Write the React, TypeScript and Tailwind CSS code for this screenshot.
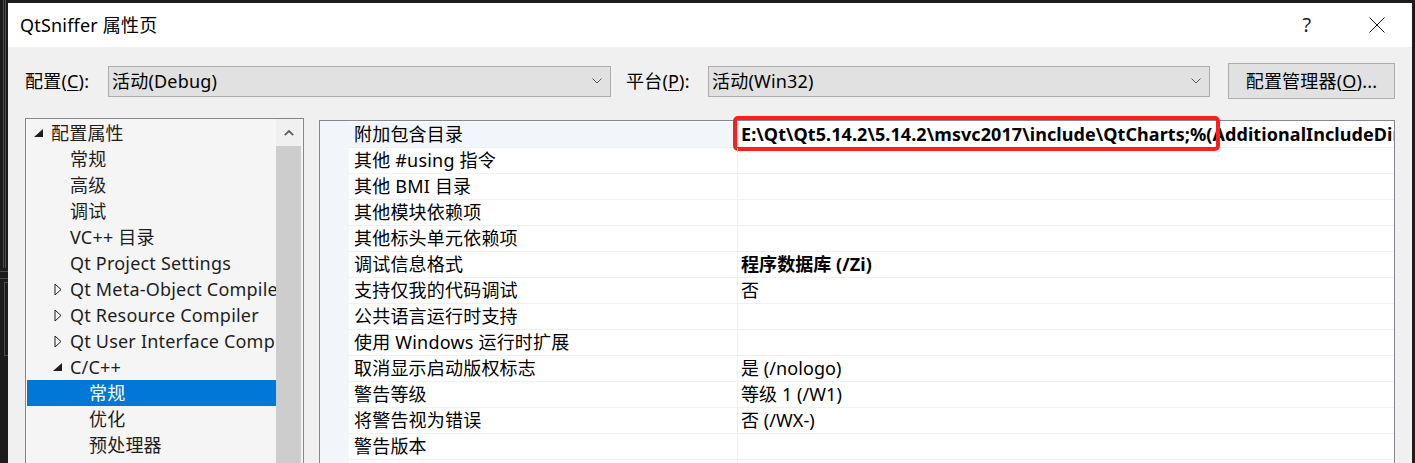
import React from "react";

type TreeItem = {
  label: string;
  level: number;
  icon?: "open" | "closed";
  selected?: boolean;
};

const treeItems: TreeItem[] = [
  { label: "配置属性", level: 0, icon: "open" },
  { label: "常规", level: 1 },
  { label: "高级", level: 1 },
  { label: "调试", level: 1 },
  { label: "VC++ 目录", level: 1 },
  { label: "Qt Project Settings", level: 1 },
  { label: "Qt Meta-Object Compiler", level: 1, icon: "closed" },
  { label: "Qt Resource Compiler", level: 1, icon: "closed" },
  { label: "Qt User Interface Compiler", level: 1, icon: "closed" },
  { label: "C/C++", level: 1, icon: "open" },
  { label: "常规", level: 2, selected: true },
  { label: "优化", level: 2 },
  { label: "预处理器", level: 2 },
];

const padByLevel = ["pl-0", "pl-[19px]", "pl-[38px]"];

type Prop = { name: string; value?: string; bold?: boolean };

const props: Prop[] = [
  {
    name: "附加包含目录",
    value:
      "E:\\Qt\\Qt5.14.2\\5.14.2\\msvc2017\\include\\QtCharts;%(AdditionalIncludeDirectories)",
    bold: true,
  },
  { name: "其他 #using 指令" },
  { name: "其他 BMI 目录" },
  { name: "其他模块依赖项" },
  { name: "其他标头单元依赖项" },
  { name: "调试信息格式", value: "程序数据库 (/Zi)", bold: true },
  { name: "支持仅我的代码调试", value: "否" },
  { name: "公共语言运行时支持" },
  { name: "使用 Windows 运行时扩展" },
  { name: "取消显示启动版权标志", value: "是 (/nologo)" },
  { name: "警告等级", value: "等级 1 (/W1)" },
  { name: "将警告视为错误", value: "否 (/WX-)" },
  { name: "警告版本" },
  { name: "SDL 检查" },
];

const Chevron = () => (
  <svg width="10" height="6" viewBox="0 0 10 6" className="shrink-0">
    <polyline points="0.5,0.5 5,5 9.5,0.5" fill="none" stroke="#555" strokeWidth="1" />
  </svg>
);

const Expander = ({ icon }: { icon?: "open" | "closed" }) => (
  <div className="w-[24px] h-full flex items-center justify-end pr-[8px] shrink-0">
    {icon === "open" && (
      <svg width="9" height="8" viewBox="0 0 9 8">
        <polygon points="9,0 9,8 0,8" fill="#1e1e1e" />
      </svg>
    )}
    {icon === "closed" && (
      <svg width="8" height="13" viewBox="0 0 8 13">
        <polygon points="1,1 7,6.5 1,12" fill="none" stroke="#1e1e1e" strokeWidth="1" />
      </svg>
    )}
  </div>
);

const Select = ({ text }: { text: string }) => (
  <div className="w-full h-[31px] bg-[#e1e1e1] border border-[#adadad] flex items-center pl-[3px] pr-[8px]">
    <span className="flex-1 whitespace-nowrap">{text}</span>
    <Chevron />
  </div>
);

const App = () => {
  return (
    <div className="w-[1415px] h-[463px] overflow-hidden bg-[#1c1c1c] flex font-['Noto_Sans','Noto_Sans_CJK_SC',sans-serif] text-[18px] tracking-[0.2px] text-black">
      {/* left strip: other windows behind */}
      <div className="w-[8px] shrink-0 flex flex-col">
        <div className="ml-[3px] w-[3px] h-[268px] border-x border-[#4b4b4b]" />
        <div className="mt-[3px] h-[8px] border-y border-[#4b4b4b]" />
        <div className="ml-[4px] w-[4px] h-[74px] border-l border-t border-b border-[#4b4b4b] mt-[3px]" />
      </div>

      <div className="w-[1404px] shrink-0 mt-[3px] flex flex-col">
        {/* title bar */}
        <div className="h-[44px] bg-white flex items-center pl-[12px] shrink-0">
          <span className="flex-1">QtSniffer 属性页</span>
          <div className="w-[70px] flex justify-center text-[20px] leading-none text-[#222]">?</div>
          <div className="w-[70px] flex justify-center">
            <svg width="16" height="16" viewBox="0 0 16 16">
              <line x1="0.5" y1="0.5" x2="15.5" y2="15.5" stroke="#111" strokeWidth="1" />
              <line x1="15.5" y1="0.5" x2="0.5" y2="15.5" stroke="#111" strokeWidth="1" />
            </svg>
          </div>
        </div>

        {/* body */}
        <div className="flex-1 min-h-0 bg-[#f0f0f0] pl-[17px] pr-[17px] pt-[16px] flex flex-col">
          <div className="h-[36px] flex items-center shrink-0">
            <span className="w-[83px] shrink-0 whitespace-nowrap">
              配置(<span className="underline underline-offset-2">C</span>):
            </span>
            <div className="w-[503px] shrink-0">
              <Select text="活动(Debug)" />
            </div>
            <span className="ml-[15px] w-[82px] shrink-0 whitespace-nowrap">
              平台(<span className="underline underline-offset-2">P</span>):
            </span>
            <div className="w-[502px] shrink-0">
              <Select text="活动(Win32)" />
            </div>
            <button className="ml-[18px] w-[167px] h-[36px] shrink-0 bg-[#e1e1e1] border border-[#adadad] flex items-center justify-center whitespace-nowrap">
              配置管理器(<span className="underline underline-offset-2">O</span>)...
            </button>
          </div>

          <div className="mt-[19px] flex items-start">
            {/* tree */}
            <div className="w-[279px] h-[400px] shrink-0 border border-[#828790] bg-[#f5f5f5] px-px flex">
              <div className="flex-1 min-w-0 pt-px flex flex-col">
                {treeItems.map((item, i) => (
                  <div
                    key={i}
                    className={`h-[26px] flex items-center overflow-hidden whitespace-nowrap leading-[26px] ${padByLevel[item.level]} ${
                      item.selected ? "bg-[#0078d7] text-white" : "text-[#1e1e1e]"
                    }`}
                  >
                    <Expander icon={item.icon} />
                    <span>{item.label}</span>
                  </div>
                ))}
              </div>
              <div className="w-[25px] shrink-0 flex flex-col mr-px">
                <div className="h-[27px] bg-[#f0f0f0] flex items-center justify-center">
                  <svg width="10" height="6" viewBox="0 0 10 6">
                    <polyline points="0.8,5.2 5,1 9.2,5.2" fill="none" stroke="#606060" strokeWidth="1.8" />
                  </svg>
                </div>
                <div className="flex-1 bg-[#cdcdcd]" />
              </div>
            </div>

            {/* property grid */}
            <div className="ml-[15px] mt-[2px] flex-1 min-w-0 h-[400px] border border-[#828790] bg-white flex">
              <div className="w-[29px] shrink-0 bg-[#f2f5fa]" />
              <div className="flex-1 min-w-0 pt-px flex flex-col">
                {props.map((p, i) => (
                  <div key={i} className="relative h-[26px] flex border-b border-[#f0f0f0] leading-[25px] whitespace-nowrap">
                    <div
                      className={`w-[389px] shrink-0 pl-[5px] border-r border-[#f0f0f0] overflow-hidden ${
                        i === 0 ? "bg-[#f2f5fa]" : ""
                      }`}
                    >
                      {p.name}
                    </div>
                    <div className={`flex-1 min-w-0 pl-[3px] overflow-hidden tracking-[0.07px] ${p.bold ? "font-bold" : ""}`}>
                      {p.value}
                    </div>
                    {i === 0 && (
                      <div className="absolute left-[384px] top-[-6px] w-[487px] h-[35px] border-4 border-[#ff1e1e] rounded-[5px] pointer-events-none" />
                    )}
                  </div>
                ))}
              </div>
            </div>
          </div>
        </div>
      </div>

      <div className="w-[3px] shrink-0" />
    </div>
  );
};

export default App;
